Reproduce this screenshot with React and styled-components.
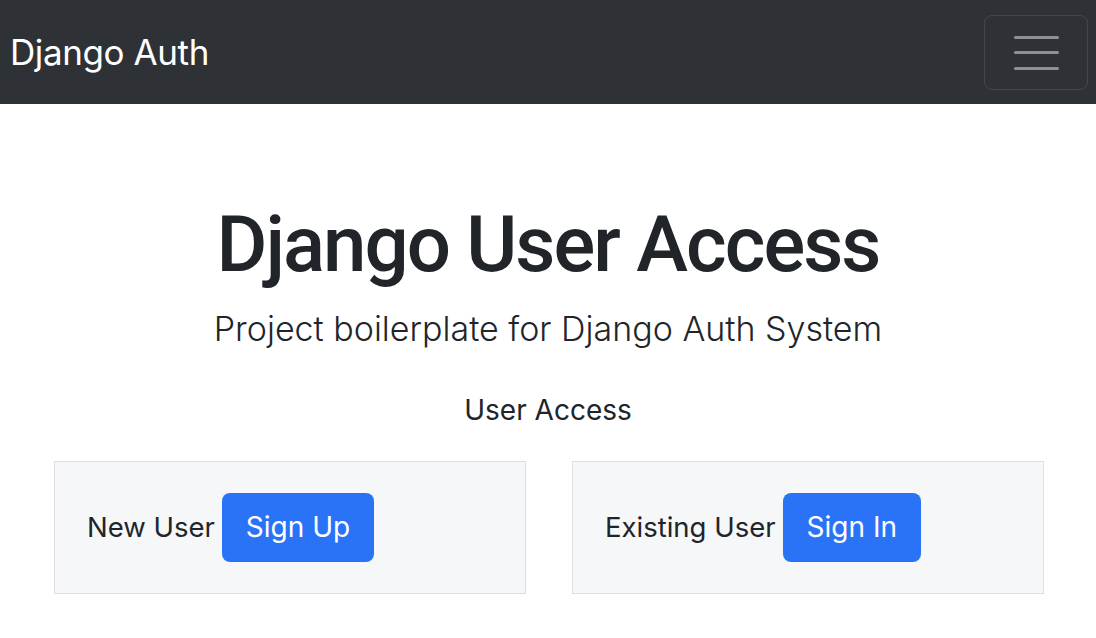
import React from 'react';
import styled, { createGlobalStyle } from 'styled-components';

const GlobalStyle = createGlobalStyle`
    * {
        box-sizing: border-box;
    }
    body {
        margin: 0;
        background: #ffffff;
        color: #212529;
        font-family: Inter, "Noto Sans", "Liberation Sans", sans-serif;
    }
`;

const NavbarStyles = styled.nav`
    height: 104px;
    background-color: #2e3237;
    display: flex;
    align-items: center;
    justify-content: space-between;
    padding: 0 8px 0 10px;
    .brand {
        color: #ffffff;
        font-size: 35px;
        font-weight: 400;
        letter-spacing: -0.4px;
    }
`;

const Toggler = styled.button`
    width: 104px;
    height: 75px;
    margin-top: 1px;
    background: transparent;
    border: 1px solid rgba(255, 255, 255, 0.1);
    border-radius: 8px;
    display: flex;
    flex-direction: column;
    align-items: center;
    justify-content: center;
    gap: 12.5px;
    padding: 0;
    span {
        display: block;
        width: 45px;
        height: 3px;
        border-radius: 2px;
        background-color: #8e9094;
    }
`;

const HeroStyles = styled.main`
    text-align: center;
    padding-top: 93.5px;
    h1 {
        margin: 0;
        font-family: Roboto, Inter, sans-serif;
        font-size: 78px;
        font-weight: 500;
        line-height: 1.2;
        letter-spacing: -2px;
    }
    .lead {
        margin: 12px 0 0;
        font-size: 34px;
        font-weight: 300;
        line-height: 1.5;
    }
    .access {
        margin: 35px 0 0;
        font-size: 28px;
        line-height: 1.5;
    }
`;

const CardRow = styled.div`
    display: grid;
    grid-template-columns: 472px 472px;
    gap: 46px;
    padding: 0 53px 0 54px;
    margin-top: 30px;
`;

const Card = styled.div`
    background-color: #f6f7f9;
    border: 1px solid #dcdee1;
    padding: 31px 32px;
    display: flex;
    align-items: baseline;
    gap: 7px;
    text-align: left;
    .label {
        font-size: 27.5px;
        color: #212529;
    }
`;

const Button = styled.a`
    display: inline-block;
    background-color: #2a73f6;
    color: #ffffff;
    font-size: 28px;
    line-height: 45px;
    padding: 12px 24px;
    border-radius: 8px;
    text-decoration: none;
`;

function AccessCard({ label, action }) {
    return (
        <Card>
            <span className="label">{label}</span>
            <Button href="#">{action}</Button>
        </Card>
    );
}

export default function App() {
    return (
        <>
            <GlobalStyle />
            <NavbarStyles>
                <span className="brand">Django Auth</span>
                <Toggler aria-label="Toggle navigation">
                    <span />
                    <span />
                    <span />
                </Toggler>
            </NavbarStyles>
            <HeroStyles>
                <h1>Django User Access</h1>
                <p className="lead">Project boilerplate for Django Auth System</p>
                <p className="access">User Access</p>
                <CardRow>
                    <AccessCard label="New User" action="Sign Up" />
                    <AccessCard label="Existing User" action="Sign In" />
                </CardRow>
            </HeroStyles>
        </>
    );
}
